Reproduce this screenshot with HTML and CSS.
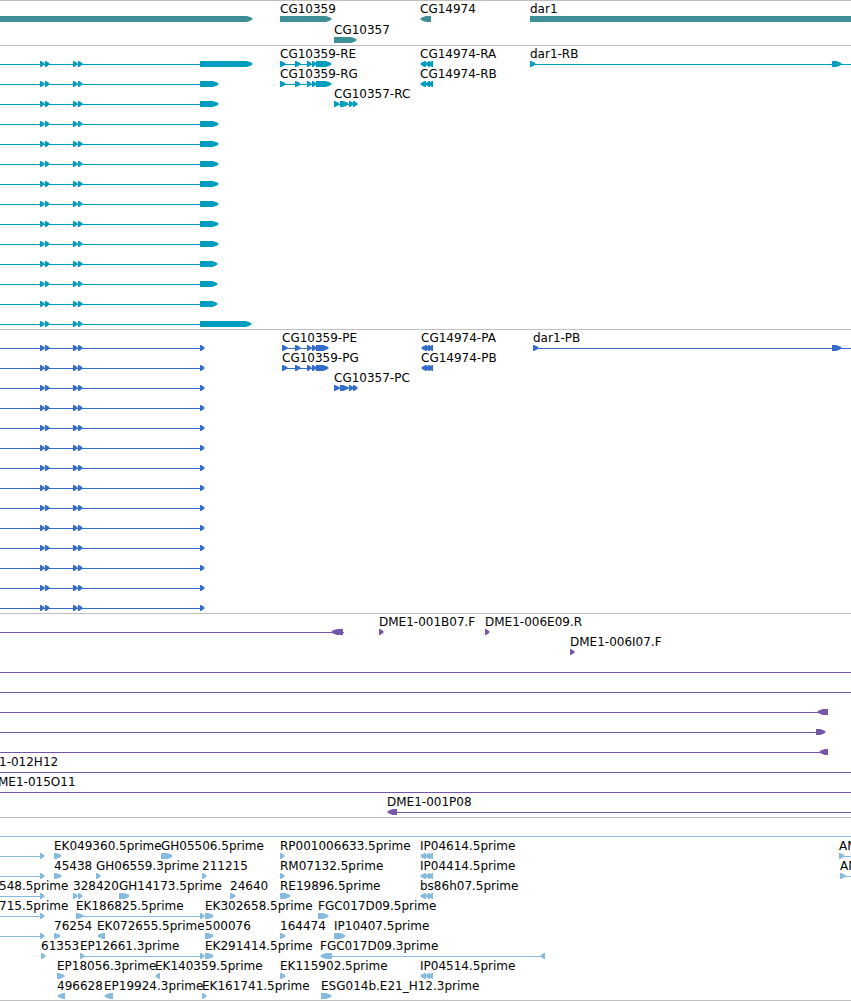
FILE: index.html
```html
<!DOCTYPE html>
<html lang="en">
<head>
<meta charset="utf-8">
<title>Genome browser</title>
<link rel="stylesheet" href="styles.css">
</head>
<body>
<main class="browser">
  <section class="track genes" data-track="genes" aria-label="Genes"></section>
  <section class="track transcripts" data-track="transcripts" aria-label="Transcripts"></section>
  <section class="track proteins" data-track="proteins" aria-label="Coding sequences"></section>
  <section class="track clones" data-track="clones" aria-label="Clones"></section>
  <section class="track ests" data-track="ests" aria-label="ESTs"></section>
</main>
<script src="tracks.js"></script>
</body>
</html>
```
FILE: styles.css
```css
body {
  margin: 0;
  background: #fff;
  color: #000;
  font-family: "DejaVu Sans", sans-serif;
  font-size: 12px;
  line-height: 14px;
}

.browser {
  display: flex;
  flex-direction: column;
  overflow: hidden;
  border-bottom: 1px solid #c0c0c0;
}

.track {
  border-top: 1px solid #c0c0c0;
  padding-bottom: 3px;
}

.row {
  position: relative;
  height: 20px;
}

.genes {
  color: #3d8e95;
  padding-bottom: 2px;
}

.genes .row {
  height: 21px;
}

.transcripts {
  color: #009dbf;
}

.proteins {
  color: #336dcc;
}

.clones {
  color: #7556a8;
}

.ests {
  color: #86bbde;
  padding-bottom: 2px;
}

.glyphs {
  display: block;
  width: 100%;
  height: 20px;
  overflow: visible;
  fill: currentColor;
}

.label {
  position: absolute;
  top: 1px;
  color: #000;
  white-space: nowrap;
}
```
FILE: tracks.js
```js
// Positions are x coordinates along the visible region; END runs to the right edge.
const END = "100%";

const feature = (label, x, fwd = [], rev = [], line = null) => ({ label, x, fwd, rev, line });
const single = (label, x, end) => feature(label, x, [[x, end]]);
const reverse = (label, x, end) => feature(label, x, [], [[x, end]]);
const span = (from, to) => feature("", 0, [], [], [from, to]);

const repeats = [[40, 45], [45, 50], [73, 78], [78, 83]];
const isoform = (end) => feature("", 0, [...repeats, [200, end]], [], [0, 200]);
const g59 = (label, x, end) =>
  feature(label, x, [[x, x + 6], [295, 301], [307, 312], [312, 317], [316, end]], [], [x, end - 5]);
const g57 = (label) => feature(label, 334, [[334, 340], [340, 349], [349, 354], [353, 358]], [], [334, 354]);
const g74 = (label, x = 420) => feature(label, x, [], [[x, x + 6], [425, 430], [428, 433]], [x + 3, 433]);
const dar = (label, x) => feature(label, x, [[x, x + 6], [832, 842]], [], [x, END]);
const tail = () => feature("", 0, [[40, 45]], [], [0, 40]);

const tracks = {
  genes: [
    [single("", -10, 253), single("CG10359", 280, 332), reverse("CG14974", 420, 431), single("dar1", 530, 9000)],
    [single("CG10357", 334, 357)],
  ],
  transcripts: [
    [isoform(253), g59("CG10359-RE", 280, 332), g74("CG14974-RA"), dar("dar1-RB", 530)],
    [isoform(219), g59("CG10359-RG", 280, 332), g74("CG14974-RB")],
    [isoform(219), g57("CG10357-RC")],
    ...Array.from({ length: 7 }, () => [isoform(219)]),
    ...Array.from({ length: 3 }, () => [isoform(218)]),
    [isoform(252)],
  ],
  proteins: [
    [isoform(205), g59("CG10359-PE", 282, 329), g74("CG14974-PA", 421), dar("dar1-PB", 533)],
    [isoform(205), g59("CG10359-PG", 282, 329), g74("CG14974-PB", 421)],
    [isoform(205), g57("CG10357-PC")],
    ...Array.from({ length: 11 }, () => [isoform(205)]),
  ],
  clones: [
    [feature("", 0, [], [[331, 343]], [0, 344]), single("DME1-001B07.F", 379, 384), single("DME1-006E09.R", 485, 490)],
    [single("DME1-006I07.F", 570, 575)],
    [span(0, END)],
    [span(0, END)],
    [feature("", 0, [], [[817, 828]], [0, 822])],
    [feature("", 0, [[816, 826]], [], [0, 820])],
    [feature("", 0, [], [[819, 828]], [0, 823])],
    [feature("1-012H12", -1, [], [], [0, END])],
    [feature("ME1-015O11", -2, [], [], [0, END])],
    [feature("DME1-001P08", 387, [], [[387, 397]], [390, END])],
  ],
  ests: [
    [span(0, END)],
    [tail(), single("EK049360.5prime", 54, 62), single("GH05506.5prime", 161, 173),
      single("RP001006633.5prime", 280, 285), g74("IP04614.5prime"), feature("AM", 839, [[839, 845]], [], [839, END])],
    [tail(), single("45438", 54, 62), single("GH06559.3prime", 96, 101), single("211215", 202, 207),
      single("RM07132.5prime", 280, 285), g74("IP04414.5prime"), feature("AM", 840, [[840, 846]], [], [840, END])],
    [tail(), feature("548.5prime", -1), feature("328420", 73, [[73, 78], [78, 83]]), single("GH14173.5prime", 119, 130),
      single("24640", 230, 236), single("RE19896.5prime", 280, 291), g74("bs86h07.5prime")],
    [tail(), feature("715.5prime", -1), feature("EK186825.5prime", 76, [[76, 84], [200, 205]], [], [80, 202]),
      single("EK302658.5prime", 205, 214), single("FGC017D09.5prime", 318, 329)],
    [tail(), single("76254", 54, 61), reverse("EK072655.5prime", 97, 105), single("500076", 205, 214),
      single("164474", 280, 286), single("IP10407.5prime", 334, 346)],
    [single("61353", 41, 46), feature("EP12661.3prime", 80, [[80, 85], [200, 205]], [], [80, 202]),
      single("EK291414.5prime", 205, 214), feature("FGC017D09.3prime", 320, [], [[320, 332], [540, 545]], [324, 541])],
    [single("EP18056.3prime", 57, 65), reverse("EK140359.5prime", 155, 160), single("EK115902.5prime", 280, 286),
      g74("IP04514.5prime")],
    [reverse("496628", 57, 65), reverse("EP19924.3prime", 104, 113), single("EK161741.5prime", 202, 207),
      single("ESG014b.E21_H12.3prime", 321, 332)],
  ],
};

const SVG = "http://www.w3.org/2000/svg";

function add(parent, name, attributes) {
  const node = document.createElementNS(SVG, name);
  for (const key in attributes) node.setAttribute(key, attributes[key]);
  parent.append(node);
}

// An exon is a 6px bar whose end narrows to a slightly rounded point.
function exonPath(base, tip) {
  const dir = Math.sign(tip - base);
  const neck = Math.abs(tip - base) > 6 ? tip - dir * 6 : base + dir;
  const bend = tip - dir * 2;
  return `M${base} 15H${neck}Q${bend} 16 ${tip} 18Q${bend} 20 ${neck} 21H${base}Z`;
}

for (const section of document.querySelectorAll(".track")) {
  for (const items of tracks[section.dataset.track]) {
    const row = document.createElement("div");
    row.className = "row";
    const svg = document.createElementNS(SVG, "svg");
    svg.setAttribute("class", "glyphs");
    row.append(svg);
    for (const { label, x, fwd, rev, line } of items) {
      if (line) {
        add(svg, "line", { x1: line[0], x2: line[1], y1: 18.5, y2: 18.5, stroke: "currentColor" });
      }
      for (const [a, b] of fwd) add(svg, "path", { d: exonPath(a, b) });
      for (const [a, b] of rev) add(svg, "path", { d: exonPath(b, a) });
      if (label) {
        const text = document.createElement("span");
        text.className = "label";
        text.style.left = `${x}px`;
        text.textContent = label;
        row.append(text);
      }
    }
    section.append(row);
  }
}
```
